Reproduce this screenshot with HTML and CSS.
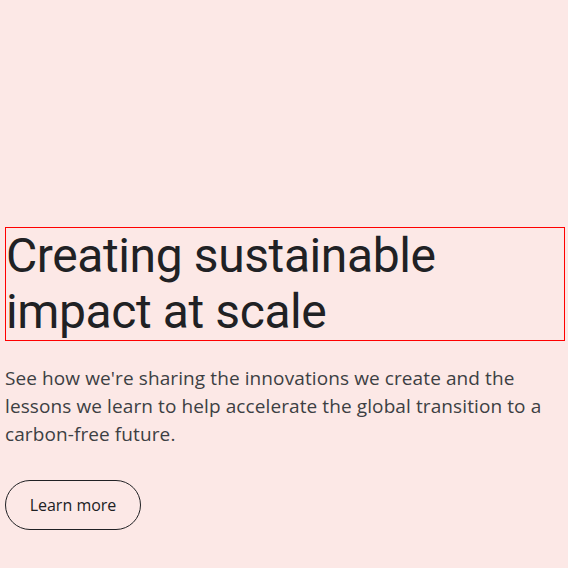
FILE: index.html
```html
<!DOCTYPE html>
<html lang="en">
<head>
<meta charset="utf-8">
<title>Creating sustainable impact at scale</title>
<link rel="stylesheet" href="styles.css">
</head>
<body>
<main class="hero">
  <h1 class="hero-title">Creating sustainable impact at scale</h1>
  <p class="hero-text">See how we're sharing the innovations we create and the lessons we learn to help accelerate the global transition to a carbon-free future.</p>
  <a class="hero-button" href="#">Learn more</a>
</main>
</body>
</html>
```
FILE: styles.css
```css
html, body {
  margin: 0;
  padding: 0;
  background: #fce8e6;
}
body {
  font-family: Roboto, "Open Sans", Arial, sans-serif;
  color: #202124;
  width: 568px;
  height: 568px;
  overflow: hidden;
}
.hero {
  display: flex;
  flex-direction: column;
  align-items: flex-start;
  padding: 228px 4px 0 5px;
}
.hero-title {
  margin: 0 0 0 1px;
  width: 558px;
  font-size: 48px;
  line-height: 56px;
  font-weight: 400;
  letter-spacing: -0.4px;
  color: #202124;
  outline: 1px solid #ff0000;
}
.hero-text {
  margin: 24px 0 0;
  font-family: "Open Sans", Roboto, Arial, sans-serif;
  font-size: 19px;
  line-height: 28px;
  letter-spacing: 0.1px;
  color: #3c4043;
}
.hero-button {
  margin-top: 32px;
  box-sizing: border-box;
  height: 50px;
  width: 136px;
  justify-content: center;
  display: inline-flex;
  align-items: center;
  border: 1px solid #202124;
  border-radius: 25px;
  font-family: "Open Sans", Roboto, Arial, sans-serif;
  font-size: 16px;
  font-weight: 400;
  color: #202124;
  text-decoration: none;
}
```
